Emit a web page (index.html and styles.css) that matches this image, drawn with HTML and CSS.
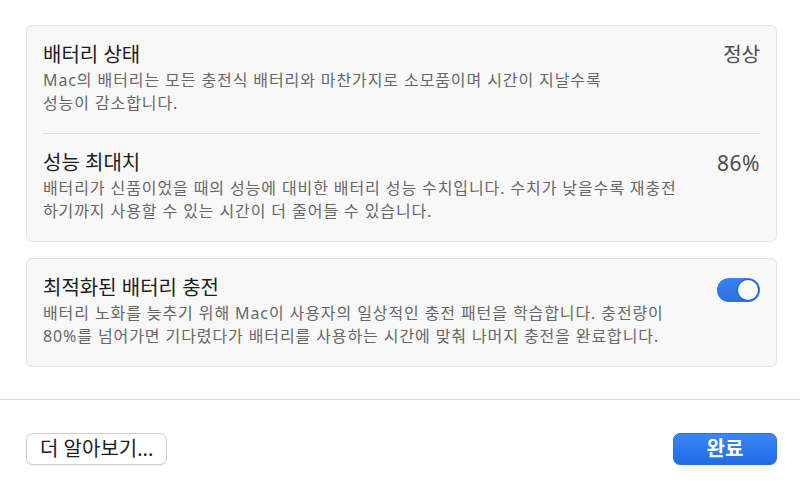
FILE: index.html
```html
<!DOCTYPE html>
<html lang="ko">
<head>
    <meta charset="UTF-8">
    <meta name="viewport" content="width=device-width, initial-scale=1.0">
    <title>배터리 상태</title>
    <link rel="stylesheet" href="styles.css">
</head>
<body>
    <div class="sheet">
        <div class="content">
            <div class="card">
                <div class="row">
                    <div class="row-text">
                        <div class="row-title">배터리 상태</div>
                        <div class="row-desc">Mac의 배터리는 모든 충전식 배터리와 마찬가지로 소모품이며 시간이 지날수록<br>성능이 감소합니다.</div>
                    </div>
                    <div class="row-value">정상</div>
                </div>
                <div class="row">
                    <div class="row-text">
                        <div class="row-title">성능 최대치</div>
                        <div class="row-desc">배터리가 신품이었을 때의 성능에 대비한 배터리 성능 수치입니다. 수치가 낮을수록 재충전<br>하기까지 사용할 수 있는 시간이 더 줄어들 수 있습니다.</div>
                    </div>
                    <div class="row-value num">86%</div>
                </div>
            </div>

            <div class="card">
                <div class="row">
                    <div class="row-text">
                        <div class="row-title">최적화된 배터리 충전</div>
                        <div class="row-desc">배터리 노화를 늦추기 위해 Mac이 사용자의 일상적인 충전 패턴을 학습합니다. 충전량이<br>80%를 넘어가면 기다렸다가 배터리를 사용하는 시간에 맞춰 나머지 충전을 완료합니다.</div>
                    </div>
                    <div class="toggle on"><span class="knob"></span></div>
                </div>
            </div>
        </div>

        <div class="footer">
            <button class="btn">더 알아보기...</button>
            <button class="btn btn-primary">완료</button>
        </div>
    </div>
</body>
</html>
```

FILE: styles.css
```css
body {
    margin: 0;
    background: #ffffff;
    font-family: "Noto Sans", "Noto Sans CJK KR", sans-serif;
    color: #1d1d1f;
}
.sheet {
    width: 800px;
    height: 487px;
    display: flex;
    flex-direction: column;
}
.content {
    padding: 25px 23px 32px 26px;
    display: flex;
    flex-direction: column;
    gap: 16px;
}
.card {
    background: #f8f8f8;
    border: 1px solid #e4e4e4;
    border-radius: 6px;
    padding: 0 16px;
}
.row {
    display: flex;
    justify-content: space-between;
    align-items: flex-start;
    padding: 18px 0 18px;
}
.row + .row {
    border-top: 1px solid #e2e2e2;
}
.row-title {
    font-size: 20px;
    line-height: 22px;
    color: #1d1d1f;
    margin-bottom: 3px;
}
.row-desc {
    font-size: 16px;
    line-height: 23px;
    letter-spacing: 0.9px;
    color: #676767;
}
.row-value {
    font-size: 20px;
    line-height: 22px;
    color: #4d4d4d;
}
.row-value.num {
    font-size: 21px;
    letter-spacing: 0.5px;
}
.toggle {
    width: 43px;
    height: 24px;
    border-radius: 12px;
    background: #c8c8c8;
    position: relative;
    margin-top: 1px;
    box-sizing: border-box;
}
.toggle.on {
    background: linear-gradient(180deg, #3a82f0, #2b6fe0);
}
.knob {
    position: absolute;
    top: 2px;
    right: 2px;
    width: 20px;
    height: 20px;
    border-radius: 50%;
    background: #ffffff;
    box-shadow: 0 0 0 1px #2462cf;
}
.footer {
    flex: 1;
    border-top: 1px solid #dcdcdc;
    display: flex;
    justify-content: space-between;
    align-items: flex-start;
    padding: 33px 23px 0 26px;
}
.btn {
    height: 32px;
    padding: 0 13px;
    font-family: inherit;
    font-size: 20px;
    line-height: 22px;
    color: #1d1d1f;
    background: #ffffff;
    border: 1px solid #cfcfcf;
    border-radius: 7px;
    box-shadow: 0 1px 1px rgba(0,0,0,0.08);
    cursor: pointer;
}
.btn-primary {
    width: 104px;
    color: #ffffff;
    font-weight: bold;
    background: linear-gradient(180deg, #3d87f5, #1f6de6);
    border-color: #2a6fe0;
}
```
